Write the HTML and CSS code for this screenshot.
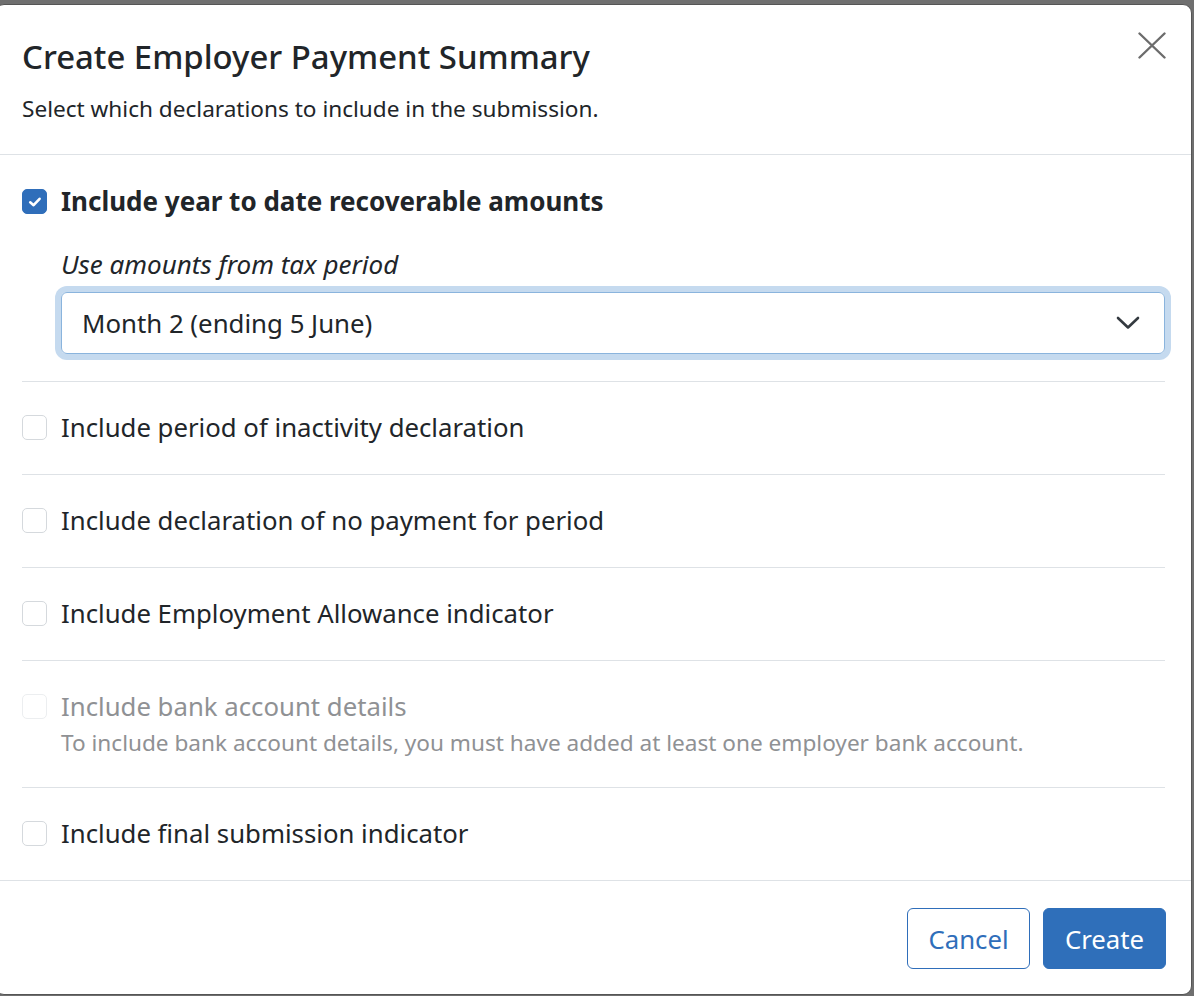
FILE: index.html
```html
<!DOCTYPE html>
<html lang="en">
<head>
<meta charset="utf-8">
<title>Create Employer Payment Summary</title>
<link rel="stylesheet" href="styles.css">
</head>
<body>
<div class="modal">
  <div class="modal-header">
    <div class="header-top">
      <h1 class="modal-title">Create Employer Payment Summary</h1>
      <button class="close" aria-label="Close">
        <svg width="28" height="27" viewBox="0 0 28 27"><path d="M1.5 1.5 L26.5 25.5 M26.5 1.5 L1.5 25.5" stroke="#6c6c6c" stroke-width="2.4" stroke-linecap="round" fill="none"/></svg>
      </button>
    </div>
    <p class="subtitle">Select which declarations to include in the submission.</p>
  </div>
  <div class="modal-body">
    <div class="section first">
      <label class="check-row">
        <span class="box checked">
          <svg width="16" height="16" viewBox="0 0 16 16"><path d="M3.2 8.3 L6.6 11.2 L12.6 4.8" stroke="#fff" stroke-width="2.6" stroke-linecap="round" stroke-linejoin="round" fill="none"/></svg>
        </span>
        <span class="label bold">Include year to date recoverable amounts</span>
      </label>
      <div class="sub">
        <div class="sub-label">Use amounts from tax period</div>
        <div class="select">
          <span>Month 2 (ending 5 June)</span>
          <svg width="24" height="14" viewBox="0 0 24 14"><path d="M2 2 L12 11.5 L22 2" stroke="#343a40" stroke-width="2.6" stroke-linecap="round" stroke-linejoin="round" fill="none"/></svg>
        </div>
      </div>
    </div>
    <div class="section">
      <label class="check-row"><span class="box"></span><span class="label">Include period of inactivity declaration</span></label>
    </div>
    <div class="section">
      <label class="check-row"><span class="box"></span><span class="label">Include declaration of no payment for period</span></label>
    </div>
    <div class="section">
      <label class="check-row"><span class="box"></span><span class="label">Include Employment Allowance indicator</span></label>
    </div>
    <div class="section disabled">
      <label class="check-row"><span class="box"></span><span class="label">Include bank account details</span></label>
      <div class="help">To include bank account details, you must have added at least one employer bank account.</div>
    </div>
    <div class="section last">
      <label class="check-row"><span class="box"></span><span class="label">Include final submission indicator</span></label>
    </div>
  </div>
  <div class="modal-footer">
    <button class="btn btn-outline">Cancel</button>
    <button class="btn btn-primary">Create</button>
  </div>
</div>
</body>
</html>
```
FILE: styles.css
```css
html, body {
  margin: 0;
  padding: 0;
}
body {
  background: #6f6f6f;
  font-family: "Noto Sans", "Open Sans", sans-serif;
  color: #212529;
  height: 996px;
  overflow: hidden;
}
.modal {
  margin: 4px 2px 0 -5px;
  width: 1197px;
  height: 991px;
  box-sizing: border-box;
  background: #fff;
  border: 1px solid #555;
  border-radius: 9px;
  display: flex;
  flex-direction: column;
}
.modal-header {
  padding: 32px 26px 28px;
  border-bottom: 1px solid #dee2e6;
}
.header-top {
  display: flex;
  justify-content: space-between;
  align-items: flex-start;
}
.modal-title {
  margin: 0;
  font-size: 32.9px;
  font-weight: 500;
  line-height: 39px;
}
.close {
  border: 0;
  background: none;
  padding: 0;
  margin: -5px -1px 0 0;
  width: 28px;
  height: 27px;
  cursor: pointer;
}
.close svg { display: block; }
.subtitle {
  margin: 16px 0 0;
  font-size: 22.6px;
  line-height: 34px;
}
.modal-body {
  flex: 1;
  padding: 0 26px;
}
.section {
  padding: 26px 0 27px;
  border-bottom: 1px solid #dee2e6;
}
.section.first { padding: 27px 0 27px; }
.section.last { border-bottom: 0; }
.check-row {
  display: flex;
  align-items: center;
  gap: 14px;
  font-size: 25.75px;
  line-height: 39px;
}
.box {
  width: 25px;
  height: 25px;
  box-sizing: border-box;
  border: 1px solid #d5d9dd;
  border-radius: 5px;
  display: flex;
  align-items: center;
  justify-content: center;
  flex: none;
}
.box.checked {
  background: #2f6eba;
  border-color: #2f6eba;
}
.box svg { display: block; }
.bold { font-weight: 700; font-size: 26px; }
.sub {
  margin: 24px 0 0 39px;
}
.sub-label {
  font-style: italic;
  font-size: 26px;
  line-height: 39px;
}
.select {
  margin-top: 8px;
  height: 62px;
  box-sizing: border-box;
  border: 1px solid #8ab4dd;
  border-radius: 6px;
  box-shadow: 0 0 0 6px #c5daef;
  display: flex;
  align-items: center;
  justify-content: space-between;
  padding: 0 24px 0 20px;
  font-size: 25.8px;
}
.disabled .label { color: #8f9194; }
.disabled .box { border-color: #eceef0; }
.help {
  color: #8f9194;
  font-size: 22.6px;
  line-height: 34px;
  margin: 0 0 0 39px;
}
.modal-footer {
  border-top: 1px solid #dee2e6;
  padding: 27px 25px 0 0;
  height: 86px;
  display: flex;
  justify-content: flex-end;
  align-items: flex-start;
  gap: 13px;
}
.btn {
  width: 123px;
  height: 61px;
  box-sizing: border-box;
  border-radius: 6px;
  font-family: inherit;
  font-size: 25.75px;
  cursor: pointer;
}
.btn-outline {
  background: #fff;
  color: #2f6eba;
  border: 1.5px solid #2f6eba;
}
.btn-primary {
  background: #2f6fba;
  color: #fff;
  border: 1.5px solid #2f6fba;
}
```
